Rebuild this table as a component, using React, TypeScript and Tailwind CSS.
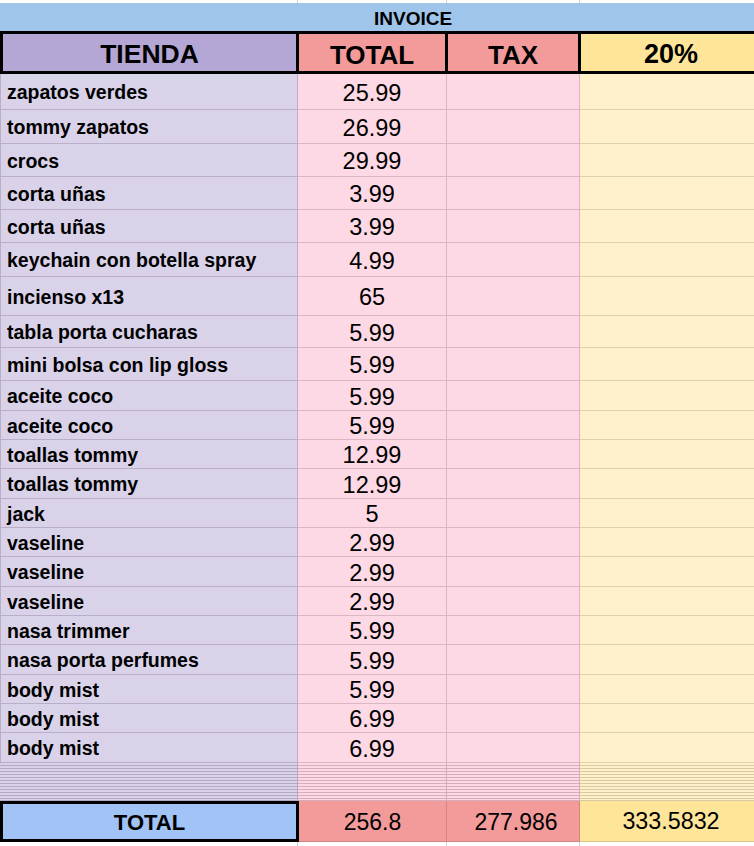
import React from "react";

const rows: [string, string, number][] = [
  ["zapatos verdes", "25.99", 36],
  ["tommy zapatos", "26.99", 34],
  ["crocs", "29.99", 33],
  ["corta uñas", "3.99", 33],
  ["corta uñas", "3.99", 33],
  ["keychain con botella spray", "4.99", 34],
  ["incienso x13", "65", 39],
  ["tabla porta cucharas", "5.99", 32],
  ["mini bolsa con lip gloss", "5.99", 33],
  ["aceite coco", "5.99", 30],
  ["aceite coco", "5.99", 29],
  ["toallas tommy", "12.99", 29],
  ["toallas tommy", "12.99", 30],
  ["jack", "5", 29],
  ["vaseline", "2.99", 29],
  ["vaseline", "2.99", 30],
  ["vaseline", "2.99", 29],
  ["nasa trimmer", "5.99", 29],
  ["nasa porta perfumes", "5.99", 30],
  ["body mist", "5.99", 29],
  ["body mist", "6.99", 29],
  ["body mist", "6.99", 30],
];

const thin = [3, 3, 3, 3, 3, 3, 3, 3, 3, 3, 3, 3, 2];

const font = { fontFamily: '"Liberation Sans", Arial, sans-serif' };

export default function App() {
  return (
    <div className="w-[754px] h-[846px] overflow-hidden bg-white text-black" style={font}>
      <div className="w-[764px]">
        {/* top sliver */}
        <div className="grid grid-cols-[298px_149px_133px_184px] h-[3px]">
          <div className="border-r border-[#d0d0d0]" />
          <div className="border-r border-[#d0d0d0]" />
          <div className="border-r border-[#d0d0d0]" />
          <div />
        </div>
        {/* INVOICE band */}
        <div className="h-[28px] bg-[#9fc6ea] flex items-center pl-[374px] pt-[2px] text-[19px] font-bold leading-none">
          INVOICE
        </div>
        {/* header */}
        <div className="grid grid-cols-[299px_149px_133px_183px] h-[43px] border-y-[3px] border-black bg-black">
          <div className="bg-[#b4a7d6] border-x-[3px] border-black flex items-center justify-center pt-[4px] text-[26.5px] font-bold leading-none">
            TIENDA
          </div>
          <div className="bg-[#f39a9a] border-r-[3px] border-black flex items-center justify-center pt-[4px] text-[26px] font-bold leading-none">
            TOTAL
          </div>
          <div className="bg-[#f39a9a] border-r-[3px] border-black flex items-center justify-center pt-[4px] text-[26px] font-bold leading-none">
            TAX
          </div>
          <div className="bg-[#ffe599] border-r-[3px] border-black flex items-center justify-center pt-[4px] text-[27px] font-bold leading-none">
            20%
          </div>
        </div>
        {/* body rows */}
        {rows.map(([name, total, h], i) => (
          <div
            key={i}
            className="grid grid-cols-[298px_149px_133px_184px]"
            style={{ height: h }}
          >
            <div className="bg-[#d9d2e9] border-b border-r border-[#b9afc9] border-l border-l-[#b9afc9] flex items-center pl-[6px] pt-[3px] text-[19.5px] font-bold leading-none whitespace-nowrap">
              {name}
            </div>
            <div className="bg-[#fdd9e5] border-b border-r border-[#dbb7c3] flex items-center justify-center pt-[4px] text-[23.5px] leading-none">
              {total}
            </div>
            <div className="bg-[#fdd9e5] border-b border-r border-[#dbb7c3]" />
            <div className="bg-[#fff1cb] border-b border-[#e0d2ad]" />
          </div>
        ))}
        {/* collapsed rows */}
        {thin.map((h, i) => (
          <div key={i} className="grid grid-cols-[298px_149px_133px_184px]" style={{ height: h }}>
            <div className="bg-[#d9d2e9] border-b border-r border-[#b3a9c4]" />
            <div className="bg-[#fdd9e5] border-b border-r border-[#d4adba]" />
            <div className="bg-[#fdd9e5] border-b border-r border-[#d4adba]" />
            <div className="bg-[#fff1cb] border-b border-[#d8c9a2]" />
          </div>
        ))}
        {/* total row */}
        <div className="grid grid-cols-[299px_148px_133px_184px] h-[41px]">
          <div className="bg-[#a2c3f5] border-[3px] border-black flex items-center justify-center pt-[2px] text-[22px] font-bold leading-none">
            TOTAL
          </div>
          <div className="bg-[#f39a9a] border-r border-b border-[#d38585] flex items-center justify-center pt-[2px] text-[23px] leading-none">
            256.8
          </div>
          <div className="bg-[#f39a9a] border-r border-b border-[#d38585] flex items-center justify-center pt-[2px] text-[23px] leading-none pl-[6px]">
            277.986
          </div>
          <div className="bg-[#ffe599] border-b border-[#dcc683] flex items-center justify-center pt-[2px] text-[23.3px] leading-none pr-[2px]">
            333.5832
          </div>
        </div>
        <div className="grid grid-cols-[298px_149px_133px_184px] h-[4px]">
          <div className="border-r border-[#d0d0d0]" />
          <div className="border-r border-[#d0d0d0]" />
          <div className="border-r border-[#d0d0d0]" />
          <div />
        </div>
      </div>
    </div>
  );
}
